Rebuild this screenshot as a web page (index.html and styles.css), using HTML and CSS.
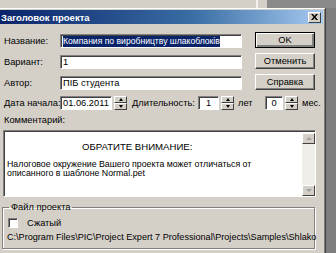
FILE: index.html
```html
<!DOCTYPE html>
<html>
<head>
<meta charset="utf-8">
<link rel="stylesheet" href="styles.css">
</head>
<body>
<div class="screen">
  <div class="backdrop">
    <div class="backwin"><span class="edge"></span></div>
    <div class="desk"></div>
  </div>
  <div class="main">
    <div class="dialog">
      <div class="titlebar">
        <span class="title">Заголовок проекта</span>
        <span class="close"><svg width="7" height="6" viewBox="0 0 7 6"><path d="M0 0h2l1.5 2L5 0h2L4.5 3 7 6H5L3.5 4 2 6H0l2.5-3z" fill="#000"/></svg></span>
      </div>
      <div class="content">
        <div class="top">
          <div class="fields">
            <div class="row"><span class="lbl">Название:</span><div class="input wide"><span class="sel">Компания по виробництву шлакоблоків</span></div></div>
            <div class="row"><span class="lbl">Вариант:</span><div class="input wide">1</div></div>
            <div class="row"><span class="lbl">Автор:</span><div class="input wide">ПІБ студента</div></div>
          </div>
          <div class="buttons">
            <div class="btn default">OK</div>
            <div class="btn">Отменить</div>
            <div class="btn">Справка</div>
          </div>
        </div>
        <div class="daterow">
          <span class="lbl">Дата начала:</span>
          <div class="input date">01.06.2011</div>
          <div class="spin"><span class="up"></span><span class="dn"></span></div>
          <span class="dlbl">Длительность:</span>
          <div class="input num years">1</div>
          <div class="spin"><span class="up"></span><span class="dn"></span></div>
          <span class="unit years-u">лет</span>
          <div class="input num months">0</div>
          <div class="spin"><span class="up"></span><span class="dn"></span></div>
          <span class="unit months-u">мес.</span>
        </div>
        <div class="clabel">Комментарий:</div>
        <div class="comment">
          <div class="ctext">
            <div class="chead">ОБРАТИТЕ ВНИМАНИЕ:</div>
            <div class="cbody">Налоговое окружение Вашего проекта может отличаться от<br>описанного в шаблоне Normal.pet</div>
          </div>
          <div class="scroll">
            <span class="sbtn"><span class="tri-up"></span></span>
            <span class="sbtn"><span class="tri-dn"></span></span>
          </div>
        </div>
        <fieldset class="group">
          <legend>Файл проекта</legend>
          <div class="checkrow"><span class="check"></span><span>Сжатый</span></div>
          <div class="path">C:\Program Files\PIC\Project Expert 7 Professional\Projects\Samples\Shlako</div>
        </fieldset>
      </div>
    </div>
    <div class="desk2"></div>
  </div>
</div>
</body>
</html>
```

FILE: styles.css
```css
* { box-sizing: border-box; }
html, body { margin: 0; padding: 0; }
body {
  width: 336px; height: 253px; overflow: hidden;
  background: #858585;
  font-family: "Liberation Sans", Arial, sans-serif;
  font-size: 9.3px; color: #000;
}
.screen { display: flex; flex-direction: column; width: 336px; height: 253px; }
.backdrop { height: 8px; display: flex; flex-shrink: 0; }
.backwin { width: 267px; background: #d4d0c8; display: flex; justify-content: flex-end; padding-right: 9px; }
.backwin .edge { width: 2px; background: #f4f2ee; }
.desk { flex: 1; background: #8a8a8a; }
.main { display: flex; flex: 1; min-height: 0; }
.desk2 { flex: 1; background: #7d7d7d; }
.dialog {
  width: 326px; flex-shrink: 0;
  background: #d4d0c8;
  border-right: 1px solid #404040;
  box-shadow: inset 0 1px #fff, inset -1px 0 #808080;
  padding: 2px 2px 0 0;
  display: flex; flex-direction: column;
}
.titlebar {
  height: 14px; flex-shrink: 0;
  background: linear-gradient(to right, #0a246a 0%, #3a6ea5 60%, #a6caf0 100%);
  display: flex; align-items: center; justify-content: space-between;
  overflow: hidden;
}
.title { color: #fff; font-weight: bold; font-size: 9.5px; margin-left: 1px; white-space: nowrap; }
.close {
  width: 13px; height: 11px; margin-right: 2px;
  background: #d4d0c8;
  border: 1px solid; border-color: #fff #404040 #404040 #fff;
  display: flex; align-items: center; justify-content: center;
}
.content { padding: 8px 0 0 4px; display: flex; flex-direction: column; }
.top { display: flex; gap: 13px; }
.fields { display: flex; flex-direction: column; gap: 7px; padding-top: 2px; }
.row { display: flex; align-items: center; height: 14px; }
.lbl { width: 56px; white-space: nowrap; }
.input {
  height: 14px; background: #fff;
  border: 1px solid; border-color: #808080 #fff #fff #808080;
  box-shadow: inset 1px 1px #404040;
  padding: 0 2px 0 2px; line-height: 12px; white-space: nowrap; overflow: hidden;
  display: flex; align-items: center;
}
.wide { width: 182px; }
.sel { background: #0a246a; color: #fff; line-height: 11px; font-size: 8.6px; }
.buttons { display: flex; flex-direction: column; gap: 5px; }
.btn {
  width: 60px; height: 16px; background: #d4d0c8;
  border: 1px solid; border-color: #fff #404040 #404040 #fff;
  box-shadow: inset -1px -1px #808080;
  display: flex; align-items: center; justify-content: center;
}
.btn.default { border-color: #000; box-shadow: inset 1px 1px #fff, inset -2px -2px #808080, inset -1px -1px #404040; }
.daterow { display: flex; align-items: center; height: 14px; margin-top: 6px; }
.date { width: 52px; margin-right: 2px; }
.spin { width: 13px; height: 14px; display: flex; flex-direction: column; }
.spin span {
  flex: 1; background: #d4d0c8;
  border: 1px solid; border-color: #fff #404040 #404040 #fff;
  display: flex; align-items: center; justify-content: center;
}
.spin .up::after { content: ""; border-left: 2.5px solid transparent; border-right: 2.5px solid transparent; border-bottom: 3px solid #000; }
.spin .dn::after { content: ""; border-left: 2.5px solid transparent; border-right: 2.5px solid transparent; border-top: 3px solid #000; }
.dlbl { margin-left: 5px; width: 66px; white-space: nowrap; }
.num { justify-content: center; }
.years { width: 21px; margin-right: 2px; }
.years-u { margin-left: 4px; width: 27px; }
.months { width: 18px; margin-right: 2px; }
.months-u { margin-left: 4px; }
.clabel { line-height: 12px; margin-top: 4px; }
.comment {
  margin: 4px 0 0 -1px; width: 313px; height: 67px;
  background: #fff;
  border: 1px solid; border-color: #808080 #fff #fff #808080;
  box-shadow: inset 1px 1px #404040;
  display: flex; padding: 2px 0 0 2px;
}
.ctext { flex: 1; padding: 8px 0 0 1px; }
.chead { font-size: 9.6px; padding-left: 75px; line-height: 11px; }
.cbody { margin-top: 8px; line-height: 9px; font-size: 8.8px; }
.scroll {
  width: 13px; background: #f0eee8;
  display: flex; flex-direction: column; justify-content: space-between;
}
.sbtn {
  height: 11px; background: #d4d0c8;
  border: 1px solid; border-color: #fff #404040 #404040 #fff;
  display: flex; align-items: center; justify-content: center;
}
.tri-up { border-left: 3px solid transparent; border-right: 3px solid transparent; border-bottom: 3px solid #a0a0a0; }
.tri-dn { border-left: 3px solid transparent; border-right: 3px solid transparent; border-top: 3px solid #a0a0a0; }
.group {
  margin: 5px 0 0 -2px; width: 313px;
  border: 1px solid #808080;
  box-shadow: inset 1px 1px #fff, 1px 1px #fff;
  padding: 4px 5px 5px 5px;
  min-width: 0;
}
.group legend { padding: 0 2px; margin-left: 1px; line-height: 11px; }
.checkrow { display: flex; align-items: center; height: 12px; gap: 9px; }
.check {
  width: 10px; height: 10px; background: #fff;
  border: 1px solid; border-color: #808080 #fff #fff #808080;
  box-shadow: inset 1px 1px #404040;
}
.path { margin: 2px 0 0 -1px; line-height: 12px; white-space: nowrap; font-size: 9.1px; }
```
